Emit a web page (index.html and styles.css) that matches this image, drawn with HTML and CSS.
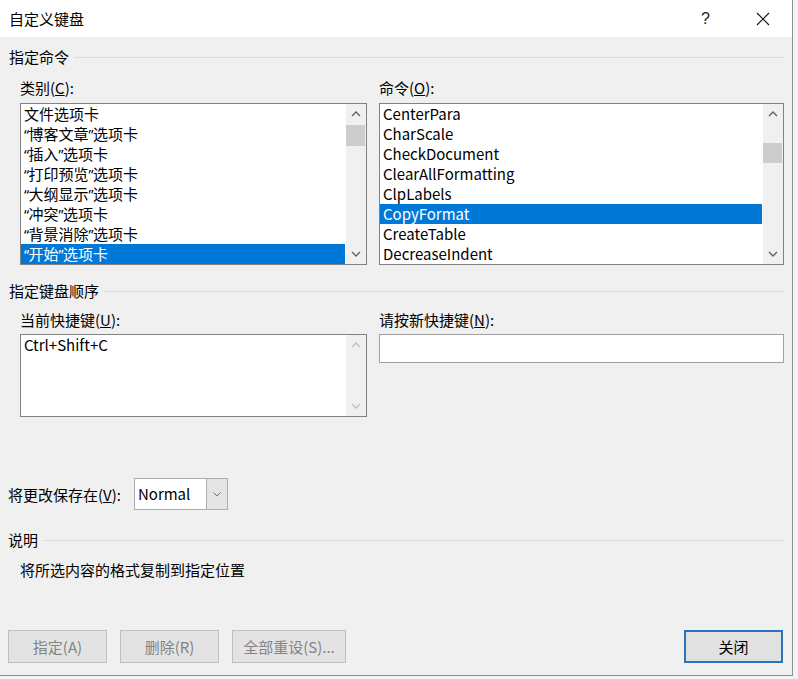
FILE: index.html
```html
<!DOCTYPE html>
<html lang="zh-CN">
<head>
<meta charset="utf-8">
<title>自定义键盘</title>
<link rel="stylesheet" href="styles.css">
</head>
<body>
<div class="dialog">
  <div class="titlebar">
    <div class="title">自定义键盘</div>
    <div class="tbtn help">?</div>
    <div class="tbtn close">
      <svg width="14" height="14" viewBox="0 0 14 14"><path d="M1 1L13 13M13 1L1 13" stroke="#111" stroke-width="1.1" fill="none"/></svg>
    </div>
  </div>
  <div class="body">
    <div class="group g1"><span>指定命令</span><i class="rule"></i></div>
    <div class="cols row1">
      <div class="col">
        <div class="label">类别(<u>C</u>):</div>
        <div class="listbox tall">
          <div class="items">
            <div class="item">文件选项卡</div>
            <div class="item"><span class="q">“</span>博客文章<span class="q">”</span>选项卡</div>
            <div class="item"><span class="q">“</span>插入<span class="q">”</span>选项卡</div>
            <div class="item"><span class="q">“</span>打印预览<span class="q">”</span>选项卡</div>
            <div class="item"><span class="q">“</span>大纲显示<span class="q">”</span>选项卡</div>
            <div class="item"><span class="q">“</span>冲突<span class="q">”</span>选项卡</div>
            <div class="item"><span class="q">“</span>背景消除<span class="q">”</span>选项卡</div>
            <div class="item sel"><span class="q">“</span>开始<span class="q">”</span>选项卡</div>
          </div>
          <div class="sbar">
            <div class="arrow"><svg width="10" height="6" viewBox="0 0 10 6"><path d="M1 5L5 1L9 5" stroke="#606060" stroke-width="1.4" fill="none"/></svg></div>
            <div class="thumb t-left"></div>
            <div class="arrow down"><svg width="10" height="6" viewBox="0 0 10 6"><path d="M1 1L5 5L9 1" stroke="#606060" stroke-width="1.4" fill="none"/></svg></div>
          </div>
        </div>
      </div>
      <div class="col">
        <div class="label">命令(<u>O</u>):</div>
        <div class="listbox tall">
          <div class="items">
            <div class="item">CenterPara</div>
            <div class="item">CharScale</div>
            <div class="item">CheckDocument</div>
            <div class="item">ClearAllFormatting</div>
            <div class="item">ClpLabels</div>
            <div class="item sel">CopyFormat</div>
            <div class="item">CreateTable</div>
            <div class="item">DecreaseIndent</div>
          </div>
          <div class="sbar">
            <div class="arrow"><svg width="10" height="6" viewBox="0 0 10 6"><path d="M1 5L5 1L9 5" stroke="#606060" stroke-width="1.4" fill="none"/></svg></div>
            <div class="thumb t-right"></div>
            <div class="arrow down"><svg width="10" height="6" viewBox="0 0 10 6"><path d="M1 1L5 5L9 1" stroke="#606060" stroke-width="1.4" fill="none"/></svg></div>
          </div>
        </div>
      </div>
    </div>
    <div class="group g2"><span>指定键盘顺序</span><i class="rule"></i></div>
    <div class="cols row2">
      <div class="col">
        <div class="label">当前快捷键(<u>U</u>):</div>
        <div class="listbox short">
          <div class="items">
            <div class="item">Ctrl+Shift+C</div>
          </div>
          <div class="sbar">
            <div class="arrow"><svg width="10" height="6" viewBox="0 0 10 6"><path d="M1 5L5 1L9 5" stroke="#c2c2c2" stroke-width="1.4" fill="none"/></svg></div>
            <div class="arrow down"><svg width="10" height="6" viewBox="0 0 10 6"><path d="M1 1L5 5L9 1" stroke="#c2c2c2" stroke-width="1.4" fill="none"/></svg></div>
          </div>
        </div>
      </div>
      <div class="col">
        <div class="label">请按新快捷键(<u>N</u>):</div>
        <div class="textbox"></div>
      </div>
    </div>
    <div class="saverow">
      <span>将更改保存在(<u>V</u>):</span>
      <div class="combo">
        <div class="combo-text">Normal</div>
        <div class="combo-btn"><svg width="8" height="5" viewBox="0 0 8 5"><path d="M0.5 0.5L4 4L7.5 0.5" stroke="#707070" stroke-width="1" fill="none"/></svg></div>
      </div>
    </div>
    <div class="group g3"><span>说明</span><i class="rule"></i></div>
    <div class="desc">将所选内容的格式复制到指定位置</div>
    <div class="buttons">
      <div class="btn dis b1">指定(A)</div>
      <div class="btn dis b2">删除(R)</div>
      <div class="btn dis b3">全部重设(S)...</div>
      <div class="btn primary">关闭</div>
    </div>
  </div>
</div>
</body>
</html>
```

FILE: styles.css
```css
html, body {
  margin: 0;
  padding: 0;
}
body {
  width: 798px;
  height: 679px;
  overflow: hidden;
  background: #f3f3f3;
  font-family: "Noto Sans CJK SC", "Noto Sans", sans-serif;
  font-size: 15px;
  color: #000;
}
.dialog {
  width: 792px;
  height: 675px;
  background: #f0f0f0;
  border-right: 1px solid #8f8f8f;
  border-bottom: 1px solid #8f8f8f;
  display: flex;
  flex-direction: column;
}
.titlebar {
  height: 37px;
  background: #fff;
  display: flex;
  align-items: center;
  flex: none;
}
.title {
  flex: 1;
  padding-left: 9px;
  font-size: 15px;
  line-height: 37px;
}
.tbtn {
  width: 57px;
  height: 37px;
  display: flex;
  align-items: center;
  justify-content: center;
}
.help {
  font-family: "Liberation Sans", sans-serif;
  font-size: 16px;
  color: #222;
}
.close {
  margin-right: 1px;
}
.body {
  flex: 1;
  display: flex;
  flex-direction: column;
  padding: 0 8px 12px 8px;
}
.group {
  display: flex;
  align-items: center;
  height: 20px;
  line-height: 20px;
  padding-left: 1px;
}
.group .rule {
  flex: 1;
  height: 1px;
  background: #d9d9d9;
  margin-left: 5px;
  margin-right: 1px;
}
.g1 { margin-top: 10px; }
.g2 { margin-top: 16px; }
.g3 { margin-top: 20px; padding-left: 0; }
.cols {
  display: grid;
  grid-template-columns: 347px 405px;
  column-gap: 12px;
  margin-left: 12px;
}
.row1 { margin-top: 11px; }
.row2 { margin-top: 9px; }
.label {
  height: 20px;
  line-height: 20px;
  margin-bottom: 5px;
}
.row2 .label { margin-bottom: 4px; }
.listbox {
  border: 1px solid #828282;
  background: #fff;
  display: flex;
  box-sizing: border-box;
}
.listbox.tall { height: 162px; }
.listbox.short { height: 83px; }
.items {
  flex: 1;
  min-width: 0;
}
.item {
  height: 20px;
  line-height: 20px;
  padding-left: 3px;
  white-space: nowrap;
}
.q {
  font-family: "Noto Sans", "Liberation Sans", sans-serif;
  font-size: 14px;
  letter-spacing: -0.5px;
}
.item.sel {
  background: #0078d7;
  color: #fff;
}
.tall .item.sel { margin-right: 1px; }
.sbar {
  width: 20px;
  background: #f0f0f0;
  display: flex;
  flex-direction: column;
}
.arrow {
  height: 20px;
  display: flex;
  align-items: center;
  justify-content: center;
}
.arrow.down { margin-top: auto; }
.thumb {
  background: #cdcdcd;
  margin: 0 1px 0 0;
}
.t-left { margin-top: 1px; height: 21px; }
.t-right { margin-top: 19px; height: 20px; }
.textbox {
  height: 29px;
  border: 1px solid #a0a0a0;
  background: #fff;
  box-sizing: border-box;
}
.saverow {
  margin-top: 61px;
  height: 32px;
  display: flex;
  align-items: center;
  gap: 13px;
}
.combo {
  width: 94px;
  height: 32px;
  box-sizing: border-box;
  border: 1px solid #adadad;
  background: #fff;
  display: flex;
}
.combo-text {
  flex: 1;
  padding-left: 3px;
  line-height: 30px;
}
.combo-btn {
  width: 20px;
  background: #e5e5e5;
  border-left: 1px solid #adadad;
  display: flex;
  align-items: center;
  justify-content: center;
}
.desc {
  margin-top: 10px;
  height: 20px;
  line-height: 20px;
  padding-left: 12px;
}
.buttons {
  margin-top: auto;
  display: flex;
  gap: 13px;
  height: 33px;
}
.btn {
  box-sizing: border-box;
  height: 33px;
  display: flex;
  align-items: center;
  justify-content: center;
  background: #e1e1e1;
  border: 1px solid #adadad;
}
.btn.dis {
  width: 99px;
  color: #838383;
  background: #e3e3e3;
  border-color: #bfbfbf;
}
.btn.b3 { width: 114px; }
.btn.primary {
  width: 99px;
  margin-left: auto;
  margin-right: 1px;
  border: 2px solid #2b72b8;
}
```
